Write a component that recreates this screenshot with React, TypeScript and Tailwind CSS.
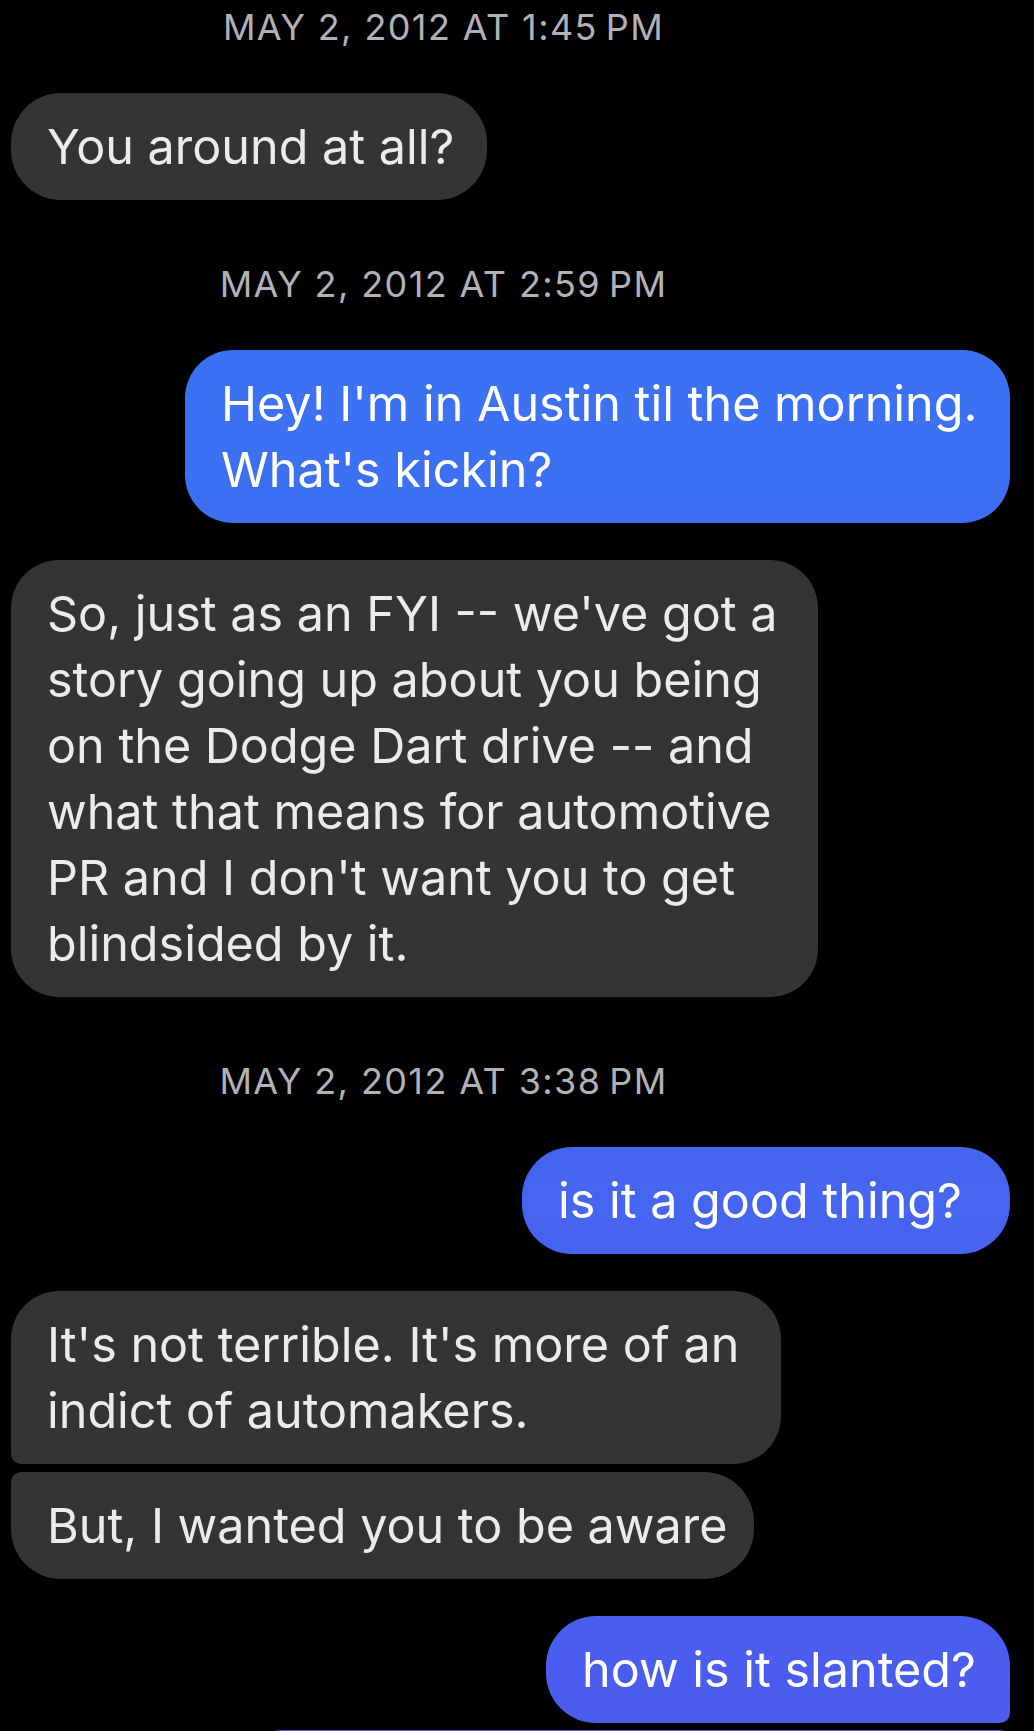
type Msg =
  | { kind: 'time'; text: string }
  | { kind: 'in' | 'out'; lines: string[]; width: string; shape: string; gap: string };

const thread: Msg[] = [
  { kind: 'time', text: 'MAY 2, 2012 AT 1:45\u2009PM' },
  { kind: 'in', lines: ['You around at all?'], width: 'w-[476px]', shape: 'rounded-[50px]', gap: 'mt-0' },
  { kind: 'time', text: 'MAY 2, 2012 AT 2:59\u2009PM' },
  {
    kind: 'out',
    lines: ["Hey! I'm in Austin til the morning.", "What's kickin?"],
    width: 'w-[825px]',
    shape: 'rounded-[48px]',
    gap: 'mt-0',
  },
  {
    kind: 'in',
    lines: [
      "So, just as an FYI -- we've got a",
      'story going up about you being',
      'on the Dodge Dart drive -- and',
      'what that means for automotive',
      "PR and I don't want you to get",
      'blindsided by it.',
    ],
    width: 'w-[807px]',
    shape: 'rounded-[48px]',
    gap: 'mt-[37px]',
  },
  { kind: 'time', text: 'MAY 2, 2012 AT 3:38\u2009PM' },
  { kind: 'out', lines: ['is it a good thing?'], width: 'w-[488px]', shape: 'rounded-[50px]', gap: 'mt-0' },
  {
    kind: 'in',
    lines: ["It's not terrible. It's more of an", 'indict of automakers.'],
    width: 'w-[770px]',
    shape: 'rounded-[48px] rounded-bl-[10px]',
    gap: 'mt-[37px]',
  },
  {
    kind: 'in',
    lines: ['But, I wanted you to be aware'],
    width: 'w-[743px]',
    shape: 'rounded-[50px] rounded-tl-[10px]',
    gap: 'mt-[8px]',
  },
  {
    kind: 'out',
    lines: ['how is it slanted?'],
    width: 'w-[464px]',
    shape: 'rounded-[50px] rounded-br-[10px]',
    gap: 'mt-[37px]',
  },
  {
    kind: 'out',
    lines: ['\u00a0'],
    width: 'w-[776px]',
    shape: 'rounded-[50px] rounded-tr-[10px]',
    gap: 'mt-[7px]',
  },
];

function Timestamp({ text, first }: { text: string; first: boolean }) {
  return (
    <div
      className={`flex justify-center pr-[147px] h-[53px] mb-[39px] text-[36px] leading-[53px] tracking-[1.4px] text-[#b2b2b6] ${
        first ? 'mt-[1px]' : 'mt-[58px]'
      }`}
    >
      {text}
    </div>
  );
}

function Bubble({ msg }: { msg: Extract<Msg, { kind: 'in' | 'out' }> }) {
  const mine = msg.kind === 'out';
  return (
    <div className={`flex ${mine ? 'justify-end pr-[24px]' : 'justify-start pl-[11px]'} ${msg.gap}`}>
      <div
        className={`${msg.width} ${msg.shape} shrink-0 pl-[36px] pr-[30px] pt-[21px] pb-[20px] text-[48.5px] leading-[66px] tracking-normal whitespace-nowrap ${
          mine ? 'bg-linear-to-b from-[#3477f3] to-[#4b5cee] bg-fixed text-white' : 'bg-[#343434] text-[#ebebeb]'
        }`}
      >
        {msg.lines.map((line, i) => (
          <div key={i}>{line}</div>
        ))}
      </div>
    </div>
  );
}

export default function App() {
  return (
    <div className="h-[1731px] w-[1034px] overflow-hidden bg-black font-[Inter,'Noto_Sans',sans-serif] antialiased">
      {thread.map((msg, i) =>
        msg.kind === 'time' ? (
          <Timestamp key={i} text={msg.text} first={i === 0} />
        ) : (
          <Bubble key={i} msg={msg} />
        )
      )}
    </div>
  );
}
